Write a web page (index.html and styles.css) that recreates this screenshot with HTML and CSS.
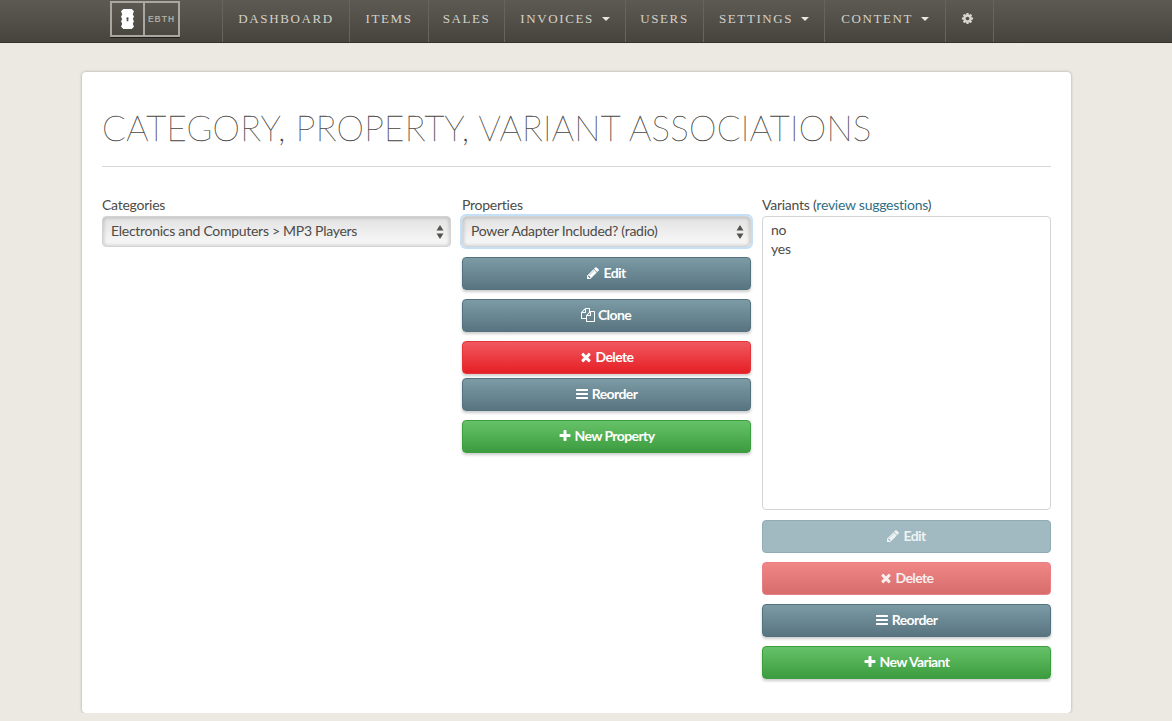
FILE: index.html
```html
<!DOCTYPE html>
<html lang="en">

<head>
    <meta charset="UTF-8">
    <meta name="viewport" content="width=device-width, initial-scale=1.0">
    <title>Category, Property, Variant Associations</title>
    <link rel="stylesheet" href="styles.css">
</head>

<body>

    <svg class="iconDefs" width="0" height="0">
        <symbol id="i-edit" viewBox="0 0 1792 1792"><path d="M491 1536l91-91-235-235-91 91v107h128v128h107zm523-928q0-22-22-22-10 0-17 7l-542 542q-7 7-7 17 0 22 22 22 10 0 17-7l542-542q7-7 7-17zm-54-192l416 416-832 832h-416v-416zm683 96q0 53-37 90l-166 166-416-416 166-165q36-38 90-38 53 0 91 38l235 234q37 39 37 91z"/></symbol>
        <symbol id="i-clone" viewBox="0 0 1792 1792"><path d="M1696 384q40 0 68 28t28 68v1216q0 40-28 68t-68 28h-960q-40 0-68-28t-28-68v-288h-544q-40 0-68-28t-28-68v-672q0-40 20-88t48-76l408-408q28-28 76-48t88-20h416q40 0 68 28t28 68v328q68-40 128-40h416zm-544 213l-299 299h299v-299zm-640-384l-299 299h299v-299zm196 647l316-316v-416h-384v416q0 40-28 68t-68 28h-416v640h512v-256q0-40 20-88t48-76zm956 804v-1152h-384v416q0 40-28 68t-68 28h-416v640h896z"/></symbol>
        <symbol id="i-delete" viewBox="0 0 1792 1792"><path d="M1490 1322q0 40-28 68l-136 136q-28 28-68 28t-68-28l-294-294-294 294q-28 28-68 28t-68-28l-136-136q-28-28-28-68t28-68l294-294-294-294q-28-28-28-68t28-68l136-136q28-28 68-28t68 28l294 294 294-294q28-28 68-28t68 28l136 136q28 28 28 68t-28 68l-294 294 294 294q28 28 28 68z"/></symbol>
        <symbol id="i-bars" viewBox="0 0 1792 1792"><path d="M1664 1344v128q0 26-19 45t-45 19h-1408q-26 0-45-19t-19-45v-128q0-26 19-45t45-19h1408q26 0 45 19t19 45zm0-512v128q0 26-19 45t-45 19h-1408q-26 0-45-19t-19-45v-128q0-26 19-45t45-19h1408q26 0 45 19t19 45zm0-512v128q0 26-19 45t-45 19h-1408q-26 0-45-19t-19-45v-128q0-26 19-45t45-19h1408q26 0 45 19t19 45z"/></symbol>
        <symbol id="i-plus" viewBox="0 0 1792 1792"><path d="M1600 736v192q0 40-28 68t-68 28h-416v416q0 40-28 68t-68 28h-192q-40 0-68-28t-28-68v-416h-416q-40 0-68-28t-28-68v-192q0-40 28-68t68-28h416v-416q0-40 28-68t68-28h192q40 0 68 28t28 68v416h416q40 0 68 28t28 68z"/></symbol>
        <symbol id="i-updown" viewBox="0 0 8 14"><path d="M4 0l3.500 5.500h-7zM4 14L.5 8.500h7z"/></symbol>
    </svg>

    <nav class="topBar">
        <a class="logo" href="#">
            <span class="logoMark">
                <svg width="13" height="20" viewBox="0 0 11 17"><path fill="#fff" fill-rule="evenodd" d="M2 0h7l2 2-1 2.500 1 2-1 2 1 2-1 2 1 2.500-2 2H2l-2-2 1-2.500-1-2 1-2-1-2 1-2-1-2.500zM5.500 7a1 1 0 0 0-.6 1.800l-.2 1.700h1.600l-.2-1.700a1 1 0 0 0-.6-1.800z"/></svg>
            </span>
            <span class="logoText">EBTH</span>
        </a>
        <ul class="navList">
            <li class="navItem"><a href="#">Dashboard</a></li>
            <li class="navItem"><a href="#">Items</a></li>
            <li class="navItem"><a href="#">Sales</a></li>
            <li class="navItem"><a href="#">Invoices <span class="caret"></span></a></li>
            <li class="navItem"><a href="#">Users</a></li>
            <li class="navItem"><a href="#">Settings <span class="caret"></span></a></li>
            <li class="navItem"><a href="#">Content <span class="caret"></span></a></li>
            <li class="navItem navGear"><a href="#" aria-label="Preferences">
                <svg width="13" height="13" viewBox="0 0 1792 1792"><path fill="#d8d5ce" d="M1152 896q0-106-75-181t-181-75-181 75-75 181 75 181 181 75 181-75 75-181zm512-109v222q0 12-8 23t-20 13l-185 28q-19 54-39 91 35 50 107 138 10 12 10 25t-9 23q-27 37-99 108t-94 71q-12 0-26-9l-138-108q-44 23-91 38-16 136-29 186-7 28-36 28h-222q-14 0-24.500-8.500t-11.500-21.500l-28-184q-49-16-90-37l-141 107q-10 9-25 9-14 0-25-11-126-114-165-168-7-10-7-23 0-12 8-23 15-21 51-66.500t54-70.500q-27-50-41-99l-183-27q-13-2-21-12.500t-8-23.500v-222q0-12 8-23t19-13l186-28q14-46 39-92-40-57-107-138-10-12-10-24 0-10 9-23 26-36 98.500-107.500t94.500-71.500q13 0 26 10l138 107q44-23 91-38 16-136 29-186 7-28 36-28h222q14 0 24.500 8.500t11.500 21.500l28 184q49 16 90 37l142-107q9-9 24-9 13 0 25 10 129 119 165 170 7 8 7 22 0 12-8 23-15 21-51 66.500t-54 70.500q26 50 41 98l183 28q13 2 21 12.500t8 23.500z"/></svg>
            </a></li>
        </ul>
    </nav>

    <main class="card">
        <h1 class="pageTitle">Category, Property, Variant Associations</h1>

        <div class="columns">
            <section class="column">
                <label class="fieldLabel">Categories</label>
                <div class="selectBox">
                    <span>Electronics and Computers &gt; MP3 Players</span>
                    <svg class="selectArrows" width="8" height="14"><use href="#i-updown"/></svg>
                </div>
            </section>

            <section class="column">
                <label class="fieldLabel">Properties</label>
                <div class="selectBox selectFocus">
                    <span>Power Adapter Included? (radio)</span>
                    <svg class="selectArrows" width="8" height="14"><use href="#i-updown"/></svg>
                </div>
                <a class="btn btnBlue firstBtn" href="#"><svg class="icon"><use href="#i-edit"/></svg> Edit</a>
                <a class="btn btnBlue gapBtn" href="#"><svg class="icon"><use href="#i-clone"/></svg> Clone</a>
                <a class="btn btnRed gapBtn" href="#"><svg class="icon"><use href="#i-delete"/></svg> Delete</a>
                <a class="btn btnBlue tightBtn" href="#"><svg class="icon"><use href="#i-bars"/></svg> Reorder</a>
                <a class="btn btnGreen gapBtn" href="#"><svg class="icon"><use href="#i-plus"/></svg> New Property</a>
            </section>

            <section class="column">
                <label class="fieldLabel">Variants (<a class="textLink" href="#">review suggestions</a>)</label>
                <ul class="listBox">
                    <li>no</li>
                    <li>yes</li>
                </ul>
                <a class="btn btnBlueOff listBtn" href="#"><svg class="icon"><use href="#i-edit"/></svg> Edit</a>
                <a class="btn btnRedOff gapBtn" href="#"><svg class="icon"><use href="#i-delete"/></svg> Delete</a>
                <a class="btn btnBlue gapBtn" href="#"><svg class="icon"><use href="#i-bars"/></svg> Reorder</a>
                <a class="btn btnGreen gapBtn" href="#"><svg class="icon"><use href="#i-plus"/></svg> New Variant</a>
            </section>
        </div>
    </main>

</body>

</html>
```

FILE: styles.css
```css
* {
    box-sizing: border-box;
}

body {
    margin: 0;
    background-color: #ece9e2;
    color: #4d4b47;
    font-family: Lato, "Open Sans", sans-serif;
    font-size: 14px;
    letter-spacing: -0.25px;
}

a {
    text-decoration: none;
}

.iconDefs {
    position: absolute;
}

/* top bar */
.topBar {
    display: flex;
    height: 43px;
    padding-left: 110px;
    background: linear-gradient(#5c5a53, #46443e);
    border-bottom: 1px solid #33312c;
}

.logo {
    display: flex;
    width: 70px;
    height: 36px;
    margin-top: 1px;
    margin-right: 42px;
    border: 2px solid #a9a79f;
    box-shadow: 0 1px 0 #1f1e1a;
}

.logoMark {
    display: flex;
    align-items: center;
    justify-content: center;
    width: 33px;
    border-right: 2px solid #a9a79f;
}

.logoText {
    flex: 1;
    text-align: center;
    line-height: 32px;
    color: #aaa89f;
    font-family: "Liberation Sans", sans-serif;
    font-size: 8.500px;
    font-weight: bold;
    letter-spacing: 1px;
}

.navList {
    display: flex;
    margin: 0;
    padding: 0;
    list-style: none;
}

.navItem {
    border-left: 1px solid #67645d;
}

.navItem:nth-child(1) { width: 127px; }
.navItem:nth-child(2) { width: 79px; }
.navItem:nth-child(3) { width: 76px; }
.navItem:nth-child(4) { width: 121px; }
.navItem:nth-child(5) { width: 78px; }
.navItem:nth-child(6) { width: 121px; }
.navItem:nth-child(7) { width: 121px; }

.navItem:last-child {
    width: 49px;
    border-right: 1px solid #67645d;
}

.navItem a {
    display: block;
    line-height: 37px;
    text-align: center;
    color: #d5d2ca;
    font-family: "Liberation Serif", serif;
    font-size: 13px;
    letter-spacing: 1.600px;
    text-transform: uppercase;
}

.navGear svg {
    display: block;
    margin: 12px 0 0 15px;
}

.caret {
    display: inline-block;
    width: 0;
    height: 0;
    margin-left: 3px;
    vertical-align: 2px;
    border-top: 4px solid #e8e6e0;
    border-left: 4px solid transparent;
    border-right: 4px solid transparent;
}

/* white card */
.card {
    height: 641px;
    margin: 29px 101px 0 82px;
    padding: 0 20px;
    background-color: #fff;
    border-radius: 4px;
    box-shadow: 0 0 3px rgba(0, 0, 0, 0.3);
}

.pageTitle {
    margin: 0;
    height: 95px;
    padding-top: 32px;
    border-bottom: 1px solid #d6d6d6;
    color: #3c3a36;
    font-size: 35px;
    font-weight: 100;
    line-height: 46px;
    letter-spacing: 0.25px;
    text-transform: uppercase;
    -webkit-text-stroke: 0.3px #4a4843;
}

.columns {
    display: grid;
    grid-template-columns: 349px 289px 289px;
    gap: 11px;
    padding-top: 29px;
}

.column {
    display: flex;
    flex-direction: column;
}

.fieldLabel {
    height: 20px;
    line-height: 17px;
}

.textLink {
    color: #2f6f86;
}

/* fake native selects */
.selectBox {
    position: relative;
    height: 31px;
    padding-left: 8px;
    line-height: 27px;
    letter-spacing: -0.28px;
    background: linear-gradient(#e2e2e2, #f9f9f9);
    border: 1px solid #d4d4d4;
    border-radius: 4px;
    box-shadow: inset 0 0 4px rgba(0, 0, 0, 0.25);
}

.selectFocus {
    box-shadow: 0 0 0 2px #c3e0f8, inset 0 0 4px rgba(0, 0, 0, 0.25);
}

.selectArrows {
    position: absolute;
    top: 8px;
    right: 6px;
    fill: #55534e;
}

.listBox {
    height: 294px;
    margin: 0;
    padding: 3px 9px 4px 8px;
    list-style: none;
    border: 1px solid #d4d4d4;
    border-radius: 4px;
    line-height: 19px;
}

/* buttons */
.btn {
    display: flex;
    align-items: center;
    justify-content: center;
    gap: 3px;
    height: 33px;
    padding: 0 1px 2px 0;
    color: #fff;
    font-weight: bold;
    letter-spacing: -0.6px;
    border-radius: 4px;
    box-shadow: 0 2px 3px rgba(0, 0, 0, 0.2);
}

.btnBlue {
    background: linear-gradient(#7c9ba5, #587480);
    border: 1px solid #537280;
}

.btnRed {
    background: linear-gradient(#f0595f, #e51f25);
    border: 1px solid #e2343a;
}

.btnGreen {
    background: linear-gradient(#66c268, #3d9c3f);
    border: 1px solid #3a9f3c;
}

.btnBlueOff {
    background: #a1b9c0;
    border: 1px solid #8fabb4;
    box-shadow: none;
    color: #eef3f4;
}

.btnRedOff {
    background: linear-gradient(#f08686, #d66c6c);
    border: 1px solid #ea8083;
    box-shadow: none;
    color: #fbeeee;
}

.firstBtn {
    margin-top: 10px;
}

.gapBtn {
    margin-top: 9px;
}

.tightBtn {
    margin-top: 4px;
}

.listBtn {
    margin-top: 10px;
}

.icon {
    width: 14px;
    height: 14px;
    fill: currentColor;
}
```
